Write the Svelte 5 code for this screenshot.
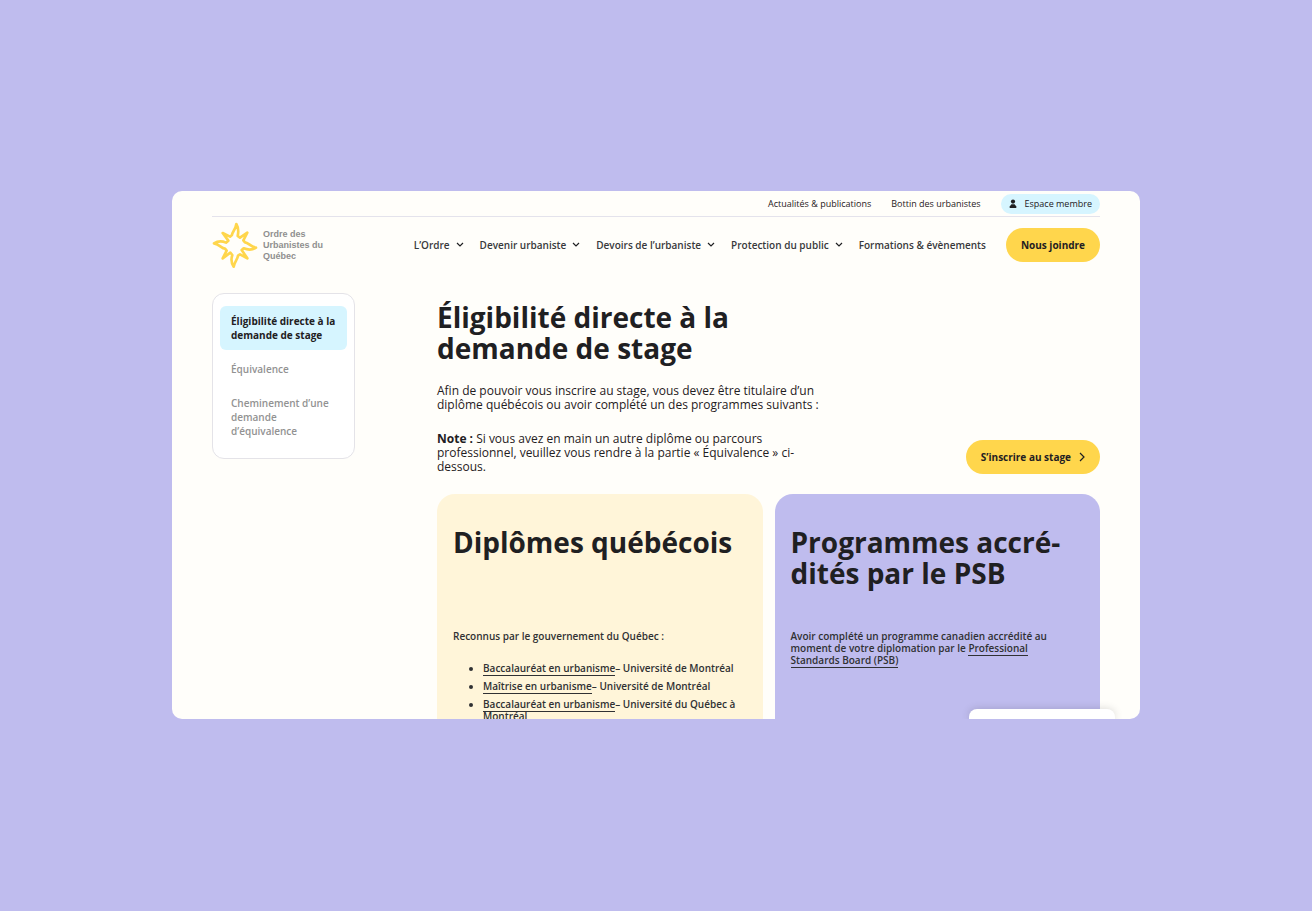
<script>
  const menu = [
    { label: 'L’Ordre', sub: true },
    { label: 'Devenir urbaniste', sub: true },
    { label: 'Devoirs de l’urbaniste', sub: true },
    { label: 'Protection du public', sub: true },
    { label: 'Formations & évènements', sub: false }
  ];
  const sections = [
    'Éligibilité directe à la demande de stage',
    'Équivalence',
    'Cheminement d’une demande d’équivalence'
  ];
  const degrees = [
    { name: 'Baccalauréat en urbanisme', school: 'Université de Montréal' },
    { name: 'Maîtrise en urbanisme', school: 'Université de Montréal' },
    { name: 'Baccalauréat en urbanisme', school: 'Université du Québec à Montréal' }
  ];
  let current = $state(0);
</script>

<div class="stage">
  <div class="window">
    <div class="topbar">
      <a href="#actualites">Actualités &amp; publications</a>
      <a href="#bottin">Bottin des urbanistes</a>
      <a class="member" href="#membre">
        <svg width="8" height="10" viewBox="0 0 8 10" aria-hidden="true">
          <circle cx="4" cy="2.6" r="2.1" />
          <path d="M2.4 5.200h3.200l1.700 2.200v1.600H.7V7.400z" />
        </svg>
        Espace membre
      </a>
    </div>

    <header>
      <a class="brand" href="#accueil">
        <svg width="46" height="46" viewBox="20 18 138 138" aria-hidden="true">
          <path
            d="M93 24C99 34 101 43 97 60L104 65L126 50L114 73L119 79C130 80 134 92 152 95C141 102 130 103 115 97L109 102L126 127L104 115L98 119C97 130 88 136 85 152C78 142 76 132 81 117L75 110L52 127L64 104L59 98C48 97 44 86 26 82C37 75 47 73 62 80L69 74L52 51L74 62L80 57C81 46 91 41 93 24Z"
          />
        </svg>
        <span>Ordre des<br />Urbanistes du<br />Québec</span>
      </a>
      <nav>
        {#each menu as item}
          <a href="#menu">
            {item.label}
            {#if item.sub}
              <svg width="8" height="6" viewBox="0 0 8 6" aria-hidden="true"><path d="M1 1l3 3 3-3" /></svg>
            {/if}
          </a>
        {/each}
      </nav>
      <button class="pill" type="button">Nous joindre</button>
    </header>

    <div class="body">
      <aside>
        {#each sections as label, i}
          <button type="button" class:active={i === current} onclick={() => (current = i)}>{label}</button>
        {/each}
      </aside>

      <main>
        <div class="intro">
          <div class="copy">
            <h1>Éligibilité directe à la demande de stage</h1>
            <p>Afin de pouvoir vous inscrire au stage, vous devez être titulaire d’un diplôme québécois ou avoir complété un des programmes suivants :</p>
            <p><strong>Note :</strong> Si vous avez en main un autre diplôme ou parcours professionnel, veuillez vous rendre à la partie «&nbsp;Équivalence&nbsp;» ci-dessous.</p>
          </div>
          <button class="pill" type="button">
            S’inscrire au stage
            <svg width="6" height="10" viewBox="0 0 6 10" aria-hidden="true"><path d="M1 1l4 4-4 4" /></svg>
          </button>
        </div>

        <div class="cards">
          <section class="cream">
            <h2>Diplômes québécois</h2>
            <p>Reconnus par le gouvernement du Québec :</p>
            <ul>
              {#each degrees as d}
                <li><a href="#diplome">{d.name}</a>– {d.school}</li>
              {/each}
            </ul>
          </section>
          <section class="lilac">
            <h2>Programmes accré&shy;dités par le PSB</h2>
            <p>Avoir complété un programme canadien accrédité au moment de votre diplomation par le <a href="#psb">Professional Standards Board (PSB)</a></p>
          </section>
        </div>
      </main>
    </div>

    <div class="popup"></div>
  </div>
</div>

<style>
  :global(body) {
    margin: 0;
    background: #bfbcee;
  }
  .stage {
    box-sizing: border-box;
    min-height: 100vh;
    padding: 0 172px;
    display: flex;
    align-items: center;
    font: 400 12px/14px 'Open Sans', sans-serif;
    color: #1f2022;
  }
  .window {
    position: relative;
    box-sizing: border-box;
    width: 100%;
    aspect-ratio: 11 / 6;
    margin-bottom: 1px;
    padding: 0 40px;
    overflow: hidden;
    border-radius: 10px;
    background: #fffefa;
  }
  a {
    color: inherit;
    text-decoration: none;
  }
  button {
    font: inherit;
    color: inherit;
    border: 0;
    cursor: pointer;
  }
  svg {
    flex: none;
  }
  .topbar {
    display: flex;
    justify-content: flex-end;
    align-items: center;
    gap: 20px;
    height: 25px;
    border-bottom: 1px solid #e4e3ec;
    font-size: 9px;
  }
  .member {
    display: flex;
    align-items: center;
    gap: 8px;
    height: 20px;
    padding: 0 8px;
    border-radius: 10px;
    background: #d6f5ff;
  }
  .member svg {
    fill: #1f2022;
  }
  header {
    display: flex;
    align-items: center;
    gap: 20px;
    height: 56px;
  }
  .brand {
    display: flex;
    align-items: center;
    gap: 5px;
    margin-right: auto;
    font: bold 9px/11px 'Liberation Sans', sans-serif;
    color: #8f8f8f;
  }
  .brand path {
    fill: none;
    stroke: #ffd64c;
    stroke-width: 8;
    stroke-linejoin: round;
  }
  nav {
    display: flex;
    gap: 16px;
    font-size: 10px;
    font-weight: 600;
    color: #38393b;
  }
  nav a {
    display: flex;
    align-items: center;
    gap: 6px;
  }
  nav path,
  .pill path {
    fill: none;
    stroke: #1f2022;
    stroke-width: 1.2;
  }
  .pill {
    display: flex;
    align-items: center;
    gap: 8px;
    height: 34px;
    padding: 0 15px;
    border-radius: 17px;
    background: #ffd64c;
    font-size: 10px;
    font-weight: 700;
  }
  .body {
    display: grid;
    grid-template-columns: 143px minmax(0, 1fr);
    column-gap: 82px;
    align-items: start;
    padding-top: 20px;
  }
  aside {
    box-sizing: border-box;
    display: grid;
    gap: 4px;
    padding: 12px 7px;
    border: 1px solid #e4e3e8;
    border-radius: 12px;
    background: #fff;
  }
  aside button {
    padding: 8px 11px;
    border-radius: 6px;
    background: none;
    text-align: left;
    font-size: 10px;
    font-weight: 600;
    color: #929292;
  }
  aside .active {
    background: #d6f5ff;
    color: #1f2022;
    font-weight: 700;
  }
  .intro {
    display: flex;
    justify-content: space-between;
    align-items: flex-end;
    padding-top: 9px;
  }
  .copy {
    width: 390px;
  }
  h1,
  h2 {
    margin: 0;
    font-size: 28px;
    line-height: 31px;
    font-weight: 700;
    color: #1f2022;
  }
  p {
    margin: 0;
  }
  .copy p {
    margin-top: 20px;
  }
  .cards {
    display: grid;
    grid-template-columns: 1fr 1fr;
    gap: 12px;
    margin-top: 20px;
    font-size: 10px;
    font-weight: 600;
    line-height: 12px;
    color: #303133;
  }
  section {
    min-height: 240px;
    padding: 33px 16px;
    border-radius: 18px 18px 0 0;
  }
  h2 {
    min-height: 103px;
  }
  .cream {
    background: #fff5d9;
  }
  .lilac {
    background: #bfbcee;
  }
  .lilac p {
    padding-right: 24px;
  }
  section a {
    border-bottom: 1px solid #303133;
  }
  ul {
    display: grid;
    gap: 6px;
    margin: 20px 0 0;
    padding-left: 30px;
  }
  .popup {
    position: absolute;
    right: 25px;
    bottom: 0;
    width: 146px;
    height: 10px;
    border-radius: 8px 8px 0 0;
    background: #fff;
    box-shadow: 0 0 8px rgb(0 0 0 / 16%);
  }
</style>
